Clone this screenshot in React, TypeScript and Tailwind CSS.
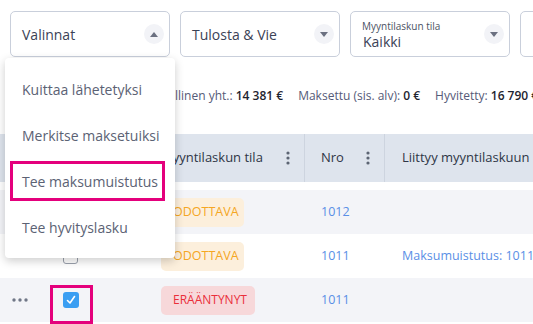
import React from 'react';

const font = { fontFamily: '"Open Sans", "Noto Sans", sans-serif' };

const Caret = ({ up }: { up?: boolean }) => (
  <div className="w-[20px] h-[20px] rounded-full bg-[#f2f3f7] flex items-center justify-center">
    <svg width="8" height="5" viewBox="0 0 8 5">
      {up ? <path d="M0 5 L4 0 L8 5 Z" fill="#6b7080" /> : <path d="M0 0 L8 0 L4 5 Z" fill="#6b7080" />}
    </svg>
  </div>
);

const Kebab = () => (
  <svg width="4" height="14" viewBox="0 0 4 14">
    <circle cx="2" cy="2" r="1.6" fill="#5c6473" />
    <circle cx="2" cy="7" r="1.6" fill="#5c6473" />
    <circle cx="2" cy="12" r="1.6" fill="#5c6473" />
  </svg>
);

const Dots = () => (
  <svg width="16" height="4" viewBox="0 0 16 4">
    <circle cx="2" cy="2" r="1.7" fill="#707787" />
    <circle cx="8" cy="2" r="1.7" fill="#707787" />
    <circle cx="14" cy="2" r="1.7" fill="#707787" />
  </svg>
);

const rows = [
  { status: 'ODOTTAVA', nro: '1012', link: '', checked: false, bg: 'bg-[#f3f4f8]' },
  { status: 'ODOTTAVA', nro: '1011', link: 'Maksumuistutus: 1011', checked: false, bg: 'bg-white' },
  { status: 'ERÄÄNTYNYT', nro: '1011', link: '', checked: true, bg: 'bg-[#f3f4f8]' },
];

const menuItems = ['Kuittaa lähetetyksi', 'Merkitse maksetuiksi', 'Tee maksumuistutus', 'Tee hyvityslasku'];

export default function App() {
  return (
    <div className="relative w-[533px] h-[324px] overflow-hidden bg-white" style={font}>
      {/* filters */}
      <div className="flex gap-[10px] pl-[10px] pt-[11px]">
        <div className="w-[160px] h-[46px] shrink-0 border border-[#c9cfdb] rounded-[5px] flex items-center justify-between pl-[11px] pr-[5px]">
          <span className="text-[14px] text-[#3b4256]">Valinnat</span>
          <Caret up />
        </div>
        <div className="w-[160px] h-[46px] shrink-0 border border-[#c9cfdb] rounded-[5px] flex items-center justify-between pl-[11px] pr-[5px]">
          <span className="text-[14px] text-[#3b4256]">Tulosta &amp; Vie</span>
          <Caret />
        </div>
        <div className="w-[160px] h-[46px] shrink-0 border border-[#c9cfdb] rounded-[5px] flex items-center justify-between pl-[11px] pr-[5px]">
          <div className="flex flex-col leading-none">
            <span className="text-[10px] text-[#4b5263] mt-[2px]">Myyntilaskun tila</span>
            <span className="text-[14px] text-[#3b4256] mt-[4px] ml-[1px]">Kaikki</span>
          </div>
          <Caret />
        </div>
        <div className="w-[160px] h-[46px] shrink-0 border border-[#c9cfdb] rounded-[5px]" />
      </div>

      {/* summary */}
      <div className="flex gap-[15px] pl-[149px] mt-[30px] h-[18px] items-center text-[12px] text-[#555a78] whitespace-nowrap">
        <span>Verollinen yht.: <b className="font-semibold text-[#1f2430]">14 381 €</b></span>
        <span>Maksettu (sis. alv): <b className="font-semibold text-[#1f2430]">0 €</b></span>
        <span>Hyvitetty: <b className="font-semibold text-[#1f2430]">16 790 €</b></span>
      </div>

      {/* table */}
      <div className="mt-[29px]">
        <div className="grid grid-cols-[40px_105px_160px_80px_1fr] h-[48px] bg-[#dee4ed] text-[13px] font-medium text-[#2e3646]">
          <div />
          <div />
          <div className="flex items-center justify-between pl-[16px] pr-[14px] border-r border-[#cdd4df]">
            <span>Myyntilaskun tila</span>
            <Kebab />
          </div>
          <div className="flex items-center justify-between pl-[16px] pr-[14px] border-r border-[#cdd4df]">
            <span>Nro</span>
            <Kebab />
          </div>
          <div className="flex items-center pl-[17px] whitespace-nowrap">
            <span>Liittyy myyntilaskuun</span>
          </div>
        </div>
        <div className="h-[8px]" />
        {rows.map((r, i) => (
          <div key={i} className={`grid grid-cols-[40px_105px_160px_80px_1fr] h-[44px] items-center ${r.bg}`}>
            <div className="flex justify-center">
              <Dots />
            </div>
            <div className="pl-[23px] flex items-center">
              {r.checked ? (
                <div className="relative w-[16px] h-[16px] rounded-[3px] bg-[#3a9ef2] flex items-center justify-center">
                  <svg width="10" height="10" viewBox="0 0 10 10">
                    <path d="M1.5 5.5 L4 8 L8.5 1.5" stroke="white" strokeWidth="1.6" fill="none" strokeLinecap="round" strokeLinejoin="round" />
                  </svg>
                  <div className="absolute left-[-13px] top-[-7px] w-[43px] h-[39px] border-[3px] border-[#e4007c]" />
                </div>
              ) : (
                <div className="w-[15px] h-[15px] rounded-[3px] border border-[#9aa0ac] bg-white" />
              )}
            </div>
            <div className="pl-[16px]">
              {r.status === 'ODOTTAVA' ? (
                <span className="inline-flex items-center h-[29px] pl-[12px] w-[83px] rounded-[5px] bg-[#fcefdc] text-[#f5a623] text-[12.5px]">ODOTTAVA</span>
              ) : (
                <span className="inline-flex items-center h-[29px] pl-[12px] w-[94px] rounded-[5px] bg-[#f7d8da] text-[#ea2f3a] text-[12px] whitespace-nowrap">ERÄÄNTYNYT</span>
              )}
            </div>
            <div className="pl-[16px] text-[12.5px] text-[#5a8fe6]">{r.nro}</div>
            <div className="pl-[17px] text-[12.5px] text-[#5a8fe6] whitespace-nowrap">{r.link}</div>
          </div>
        ))}
      </div>

      {/* dropdown menu */}
      <div className="absolute left-[5px] top-[58px] w-[170px] h-[200px] bg-white rounded-[4px] shadow-[0_3px_10px_rgba(0,0,0,0.2)] flex flex-col pt-[8px]">
        {menuItems.map((m, i) => (
          <div key={i} className="relative h-[46px] flex items-center pl-[17px] text-[14px] text-[#5b6274]">
            {m}
            {i === 2 && <div className="absolute left-[5px] top-[3px] w-[155px] h-[40px] border-[3px] border-[#e4007c]" />}
          </div>
        ))}
      </div>
    </div>
  );
}
